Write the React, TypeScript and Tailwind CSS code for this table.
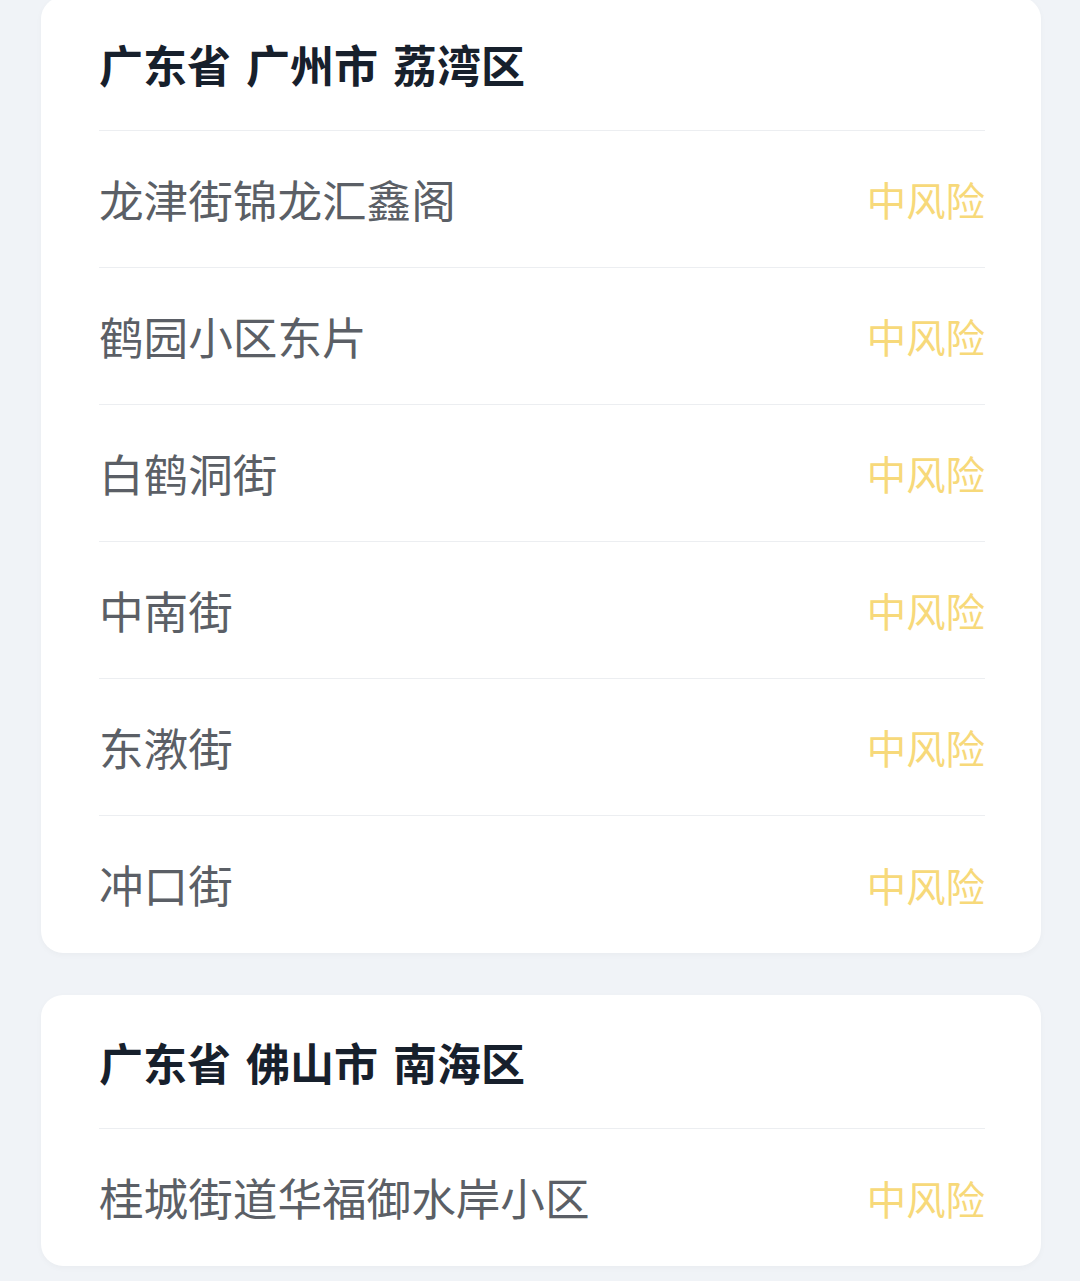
import React from 'react';

interface Area {
  title: string;
  places: string[];
}

const areas: Area[] = [
  {
    title: '广东省 广州市 荔湾区',
    places: ['龙津街锦龙汇鑫阁', '鹤园小区东片', '白鹤洞街', '中南街', '东漖街', '冲口街'],
  },
  {
    title: '广东省 佛山市 南海区',
    places: ['桂城街道华福御水岸小区'],
  },
];

const font = { fontFamily: '"Noto Sans CJK SC", "Noto Sans", sans-serif' };

const AreaCard: React.FC<{ area: Area; first?: boolean }> = ({ area, first }) => (
  <div className={`bg-white rounded-[22px] pl-[58px] pr-[56px] shadow-[0_2px_6px_rgba(0,0,0,0.03)] ${first ? '-mt-[3px]' : ''}`}>
    <div className="h-[134px] flex items-center border-b border-[#eceef1]">
      <h3 className="text-[44px] font-bold text-[#17202c] leading-none whitespace-pre [word-spacing:5px]">{area.title}</h3>
    </div>
    {area.places.map((p, i) => (
      <div
        key={p}
        className={`h-[137px] flex items-center justify-between ${i < area.places.length - 1 ? 'border-b border-[#eceef1]' : ''}`}
      >
        <span className="text-[44.6px] text-[#5b5f66] leading-none">{p}</span>
        <span className="text-[39.4px] text-[#f7d97a] leading-none">中风险</span>
      </div>
    ))}
  </div>
);

export default function App() {
  return (
    <div className="min-h-[1281px] bg-[#f0f3f7] pl-[41px] pr-[39px] pb-[13px] flex flex-col gap-[42px] overflow-hidden" style={font}>
      {areas.map((a, i) => (
        <AreaCard key={a.title} area={a} first={i === 0} />
      ))}
    </div>
  );
}
